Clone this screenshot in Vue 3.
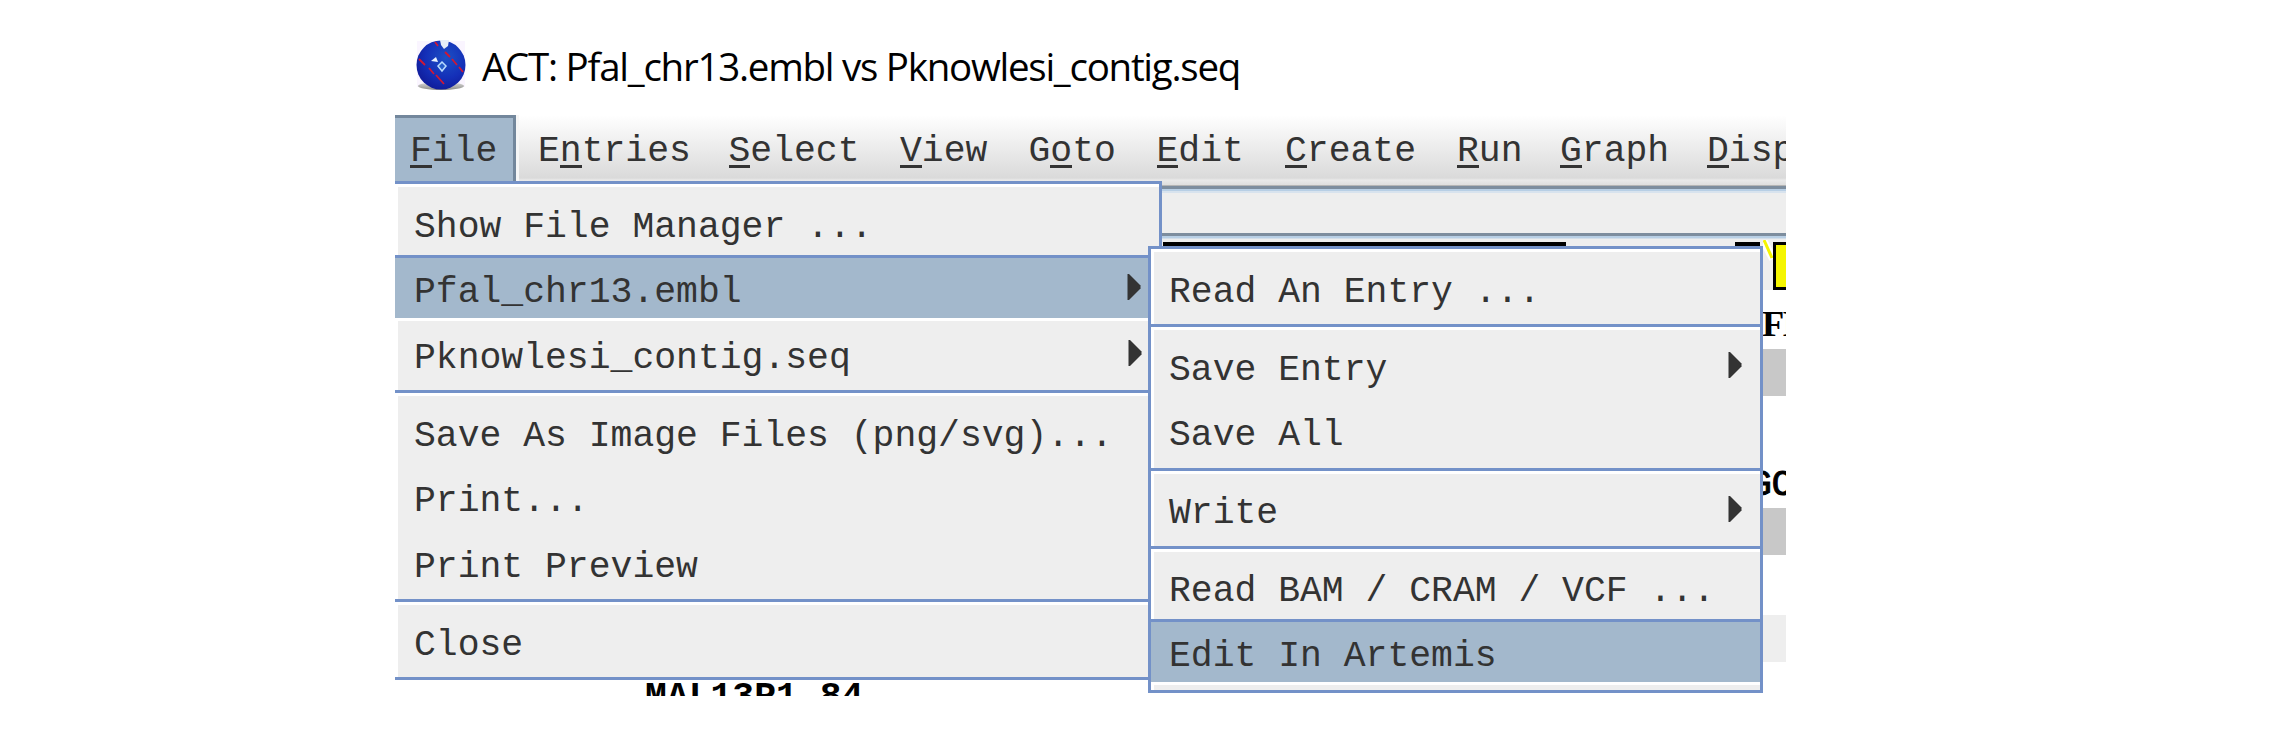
<script setup>
const menus = [
  ['', 'F', 'ile', 128], ['E', 'n', 'tries', 190.5], ['', 'S', 'elect', 171.5],
  ['', 'V', 'iew', 128.5], ['G', 'o', 'to', 128], ['', 'E', 'dit', 128.5],
  ['', 'C', 'reate', 172], ['', 'R', 'un', 103], ['', 'G', 'raph', 147], ['', 'D', 'isp', 90],
]
const fileMenu = [
  { label: 'Show File Manager ...' },
  { label: 'Pfal_chr13.embl', sub: true, selected: true },
  { label: 'Pknowlesi_contig.seq', sub: true },
  { sep: true },
  { label: 'Save As Image Files (png/svg)...' },
  { label: 'Print...' },
  { label: 'Print Preview' },
  { sep: true },
  { label: 'Close' },
]
const entryMenu = [
  { label: 'Read An Entry ...' },
  { sep: true },
  { label: 'Save Entry', sub: true },
  { label: 'Save All' },
  { sep: true },
  { label: 'Write', sub: true },
  { sep: true },
  { label: 'Read BAM / CRAM / VCF ...' },
  { label: 'Edit In Artemis', selected: true },
]
const popups = [
  { name: 'file', items: fileMenu },
  { name: 'entry', items: entryMenu },
]
</script>

<template>
  <div class="page">
    <div class="window">
      <header class="title">
        <svg class="logo" width="50" height="50" viewBox="0 0 50 50">
          <defs>
            <radialGradient id="ball" cx=".6" cy=".35" r=".7">
              <stop offset="0" stop-color="#1c50c4" />
              <stop offset=".6" stop-color="#142fb8" />
              <stop offset="1" stop-color="#101b98" />
            </radialGradient>
            <linearGradient id="shade" x1="0" y1="0" x2="0" y2="1">
              <stop offset="0" stop-color="#ddd" />
              <stop offset="1" stop-color="#8d8d88" />
            </linearGradient>
          </defs>
          <rect x="1" y="1" width="48" height="46" fill="#faf5ff" />
          <ellipse cx="25" cy="46" rx="23" ry="4" fill="url(#shade)" />
          <circle cx="25" cy="25" r="24.5" fill="url(#ball)" />
          <path d="M24 0h9l-1 6-4 3-3-4z" fill="#e6eef8" />
          <path d="M19 2l3 4M29 12l5 5M36 19l5 6M43 27l4 5M3 19l6 6M13 28l5 6M20 35l8 9" stroke="#cf1735" stroke-width="1.8" />
          <path d="M15 21l5-4 2 5z" fill="#e8f2ff" />
          <path d="M26 22l4 4-4 5-4-5z" fill="#285fc9" stroke="#b9dcff" stroke-width="1.5" />
        </svg>
        <span class="caption">ACT: Pfal_chr13.embl vs Pknowlesi_contig.seq</span>
      </header>
      <nav class="bar">
        <div v-for="(m, i) in menus" :key="i" class="menu" :class="{ open: i === 0 }" :style="{ width: m[3] + 'px' }">{{ m[0] }}<span class="key">{{ m[1] }}</span>{{ m[2] }}</div>
      </nav>
      <div class="tools"></div>
      <main class="view">
        <div class="track">
          <i class="line one"></i><i class="line two"></i>
          <svg class="zig" width="12" height="24" viewBox="0 0 12 24"><path d="M0 0l10 19" stroke="#fff" stroke-width="8" /><path d="M1 0l8 18" stroke="#f5f500" stroke-width="3" /></svg>
          <i class="feature"></i>
        </div>
        <div class="gene">FI</div>
        <div class="strand"></div>
        <div class="gene second">GO</div>
        <div class="strand"></div>
        <div class="strand pale"></div>
        <div class="locus">MAL13P1.84</div>
      </main>
      <div v-for="p in popups" :key="p.name" class="popup" :class="p.name">
        <template v-for="(it, i) in p.items" :key="i">
          <div v-if="it.sep" class="sep"></div>
          <div v-else class="item" :class="{ selected: it.selected }">
            <span>{{ it.label }}</span>
            <svg v-if="it.sub" class="arrow" width="14" height="26" viewBox="0 0 14 26"><path d="M.5 0h1.5L13.5 11.5v3L2 26H.5z" fill="#333" /></svg>
          </div>
        </template>
      </div>
    </div>
  </div>
</template>

<style>
body { margin: 0; background: #fff; }
</style>

<style scoped>
.page { width: 2286px; height: 732px; overflow: hidden; box-sizing: border-box; padding-left: 395px; background: #fff; }
.window { position: relative; width: 1391px; height: 696px; overflow: hidden; font-family: "Liberation Mono", monospace; font-size: 36.4px; line-height: 42px; color: #333; white-space: pre; }
.title { box-sizing: border-box; height: 115px; padding: 40px 0 0 21px; display: flex; align-items: flex-start; }
.logo { flex: none; }
.caption { margin: -1px 0 0 16px; font: 38.5px/54px "Open Sans", sans-serif; letter-spacing: -1.26px; color: #000; }
.bar { height: 70px; display: flex; box-sizing: border-box; background: linear-gradient(#fff, #dadada 90%, #e9e9e9 93%, #dedede); }
.menu { box-sizing: border-box; flex: none; padding-top: 16px; height: 66px; }
.menu.open { margin-right: 22px; max-width: 121px; padding: 13px 0 0 15px; border-top: 3px solid #73879c; border-right: 3px solid #73879c; background: #a3b8cc; box-shadow: 3px 0 #f6f6f6; }
.key { display: inline-block; height: 53px; margin-bottom: -11px; background: linear-gradient(#333, #333) 0 34px / 100% 3px no-repeat; }
.tools { height: 56px; background: linear-gradient(#b5b5b5 0 1px, #7d8d9e 1px 4px, #b8cfe5 4px 6px, #d8e3ee 6px 8px, #eee 8px 48px, #7d8d9e 48px 51px, #b8cfe5 51px 53px, #eee 54px); }
.track { position: relative; height: 49px; background: #eee; }
.line { position: absolute; top: 1px; height: 4px; background: #000; }
.line.one { left: 768px; width: 403px; }
.line.two { left: 1340px; width: 25px; }
.zig { position: absolute; left: 1368px; top: -1px; }
.feature { position: absolute; left: 1378px; top: 1px; width: 20px; height: 48px; box-sizing: border-box; border: 3px solid #000; background: #f5f500; }
.gene { margin-left: 1367px; height: 59px; box-sizing: border-box; padding-top: 13px; font-family: "Liberation Serif", serif; font-weight: bold; letter-spacing: -2px; color: #000; }
.gene.second { height: 112px; padding-top: 69px; margin-left: 1355px; font-family: "Liberation Mono", monospace; font-weight: normal; letter-spacing: 0; -webkit-text-stroke: 1px #000; }
.strand { height: 47px; margin-left: 1368px; background: #c8c8c8; }
.strand.pale { margin-top: 60px; background: #eee; }
.locus { margin: 15px 0 0 250px; font-weight: bold; color: #000; }
.popup { position: absolute; box-sizing: border-box; border: 3px solid #7391c8; background: #eee; box-shadow: inset 3px 3px #fff; padding-top: 7.3px; }
.popup.file { left: -3px; top: 181px; width: 770px; height: 499px; }
.popup.entry { left: 753px; top: 246px; width: 615px; height: 446.5px; }
.item { box-sizing: border-box; height: 65.5px; padding: 15.3px 18px 0 18px; display: flex; justify-content: space-between; align-items: flex-start; }
.popup.file .item { padding-left: 19px; width: 765px; }
.arrow { margin-top: 2.5px; }
.item.selected { height: 63px; margin: -2px 0 4.5px; border-top: 3px solid #7391c8; padding-top: 14.2px; background: #a3b8cc; box-shadow: 0 3px #fff; }
.popup.file .item.selected { width: 764px; }
.sep { height: 3px; margin: 2.3px 0 7.2px; background: #7391c8; box-shadow: 0 3px #fff; }
</style>
